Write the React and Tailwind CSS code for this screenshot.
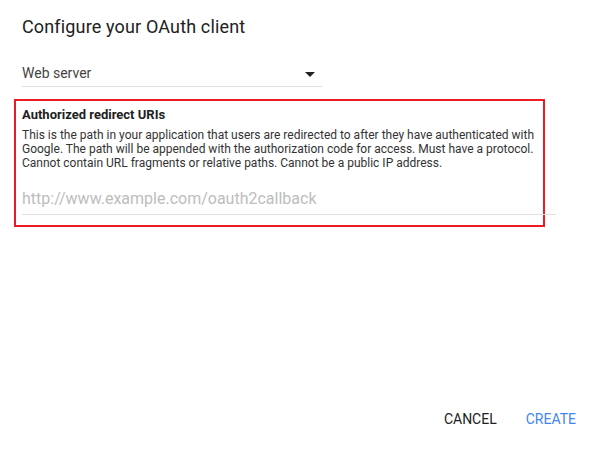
export default function App() {
    return (
        <div className="h-screen w-full bg-white flex flex-col px-[22px] font-['Roboto',sans-serif]">
            <h1 className="mt-[15px] text-[18px] leading-[24px] tracking-[0.15px] text-[#212121] font-normal">Configure your OAuth client</h1>

            {/* Application type */}
            <div className="mt-[15px] w-[300px] h-[33px] border-b border-[#e0e0e0] flex items-end justify-between pb-[3px]">
                <span className="text-[14px] leading-[20px] text-[#444]">Web server</span>
                <span className="w-0 h-0 mr-[7px] mb-[6px] border-l-[5px] border-r-[5px] border-t-[5px] border-l-transparent border-r-transparent border-t-[#222]" />
            </div>

            {/* Redirect URIs */}
            <div className="mt-[12px] -mx-[8px] border-2 border-[#ed1c24] pl-[6px] pr-[6px] pt-[6px] pb-[10px] w-[531px]">
                <h2 className="text-[13px] leading-[16px] font-bold text-[#212121]">Authorized redirect URIs</h2>
                <p className="mt-[5px] text-[12px] leading-[14px] text-[#333]">
                    This is the path in your application that users are redirected to after they have authenticated with Google. The path will be appended with the authorization code for access. Must have a protocol. Cannot contain URL fragments or relative paths. Cannot be a public IP address.
                </p>
                <input
                    type="text"
                    placeholder="http://www.example.com/oauth2callback"
                    className="mt-[17px] block w-[534px] text-[16px] leading-[24px] pb-[3px] border-b border-[#e0e0e0] outline-none placeholder:text-[#bdbdbd] bg-transparent"
                />
            </div>

            {/* Actions */}
            <div className="mt-auto mb-[23px] flex justify-end gap-[29px] -mr-[1px]">
                <button className="text-[14px] leading-[20px] text-[#212121]">CANCEL</button>
                <button className="text-[14px] leading-[20px] text-[#4285f4]">CREATE</button>
            </div>
        </div>
    );
}
